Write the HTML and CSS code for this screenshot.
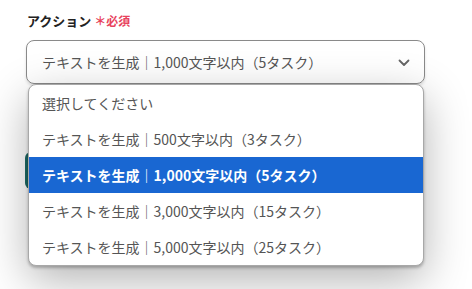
FILE: index.html
```html
<!DOCTYPE html>
<html lang="ja">
<head>
  <meta charset="UTF-8" />
  <meta name="viewport" content="width=device-width, initial-scale=1.0"/>
  <title>アクション</title>
  <link rel="stylesheet" href="styles.css">
</head>
<body>

  <div class="field">
    <div class="label">アクション <span class="required">＊必須</span></div>

    <div class="select">
      <span class="select-value">テキストを生成｜1,000文字以内（5タスク）</span>
      <svg class="chevron" width="12" height="8" viewBox="0 0 12 8">
        <path d="M1.5 1.5 L6 6 L10.5 1.5" fill="none" stroke="#666" stroke-width="1.8" stroke-linecap="round" stroke-linejoin="round"/>
      </svg>
    </div>

    <!-- dropdown list, opened over the button -->
    <ul class="options">
      <li>選択してください</li>
      <li>テキストを生成｜500文字以内（3タスク）</li>
      <li class="active">テキストを生成｜1,000文字以内（5タスク）</li>
      <li>テキストを生成｜3,000文字以内（15タスク）</li>
      <li>テキストを生成｜5,000文字以内（25タスク）</li>
    </ul>

    <button class="save" aria-label="保存する"></button>
  </div>

</body>
</html>
```

FILE: styles.css
```css
html {
  height: 100%;
}

body {
  font-family: 'Noto Sans CJK JP', 'Noto Sans', sans-serif;
  background-color: #fff;
  margin: 0;
  min-height: 100%;
  box-sizing: border-box;
  padding: 11px 47px 0 26px;
  color: #555;
}

.field {
  position: relative;
  min-height: 278px;
}

.label {
  font-size: 13px;
  font-weight: bold;
  color: #222;
  line-height: 20px;
  margin-left: 1px;
}

.required {
  color: #e8435c;
  font-size: 12px;
  font-weight: bold;
}

.select {
  margin-top: 9px;
  height: 42px;
  border: 1px solid #8a8a8a;
  border-radius: 8px;
  display: flex;
  align-items: center;
  justify-content: space-between;
  padding: 0 14px 0 15px;
  box-shadow: 0 2px 3px rgba(0, 0, 0, 0.12);
  font-size: 14px;
  color: #555;
}

.chevron {
  margin-top: 2px;
}

.options {
  position: absolute;
  top: 73px;
  left: 2px;
  right: 1px;
  margin: 0;
  padding: 0;
  list-style: none;
  background: #fff;
  border: 1px solid #a8a8a8;
  border-radius: 8px;
  overflow: hidden;
  box-shadow: 0 2px 3px rgba(0, 0, 0, 0.25), 0 14px 45px rgba(0, 0, 0, 0.3);
  z-index: 2;
}

.options li {
  height: 36px;
  line-height: 36px;
  padding-left: 13px;
  font-size: 14px;
  color: #555;
}

.options li.active {
  background-color: #1967d2;
  color: #fff;
  font-weight: bold;
}

.save {
  display: block;
  margin-top: 68px;
  margin-left: -1px;
  height: 37px;
  width: 160px;
  border: none;
  border-radius: 6px;
  background-color: #1d6b66;
}
```
